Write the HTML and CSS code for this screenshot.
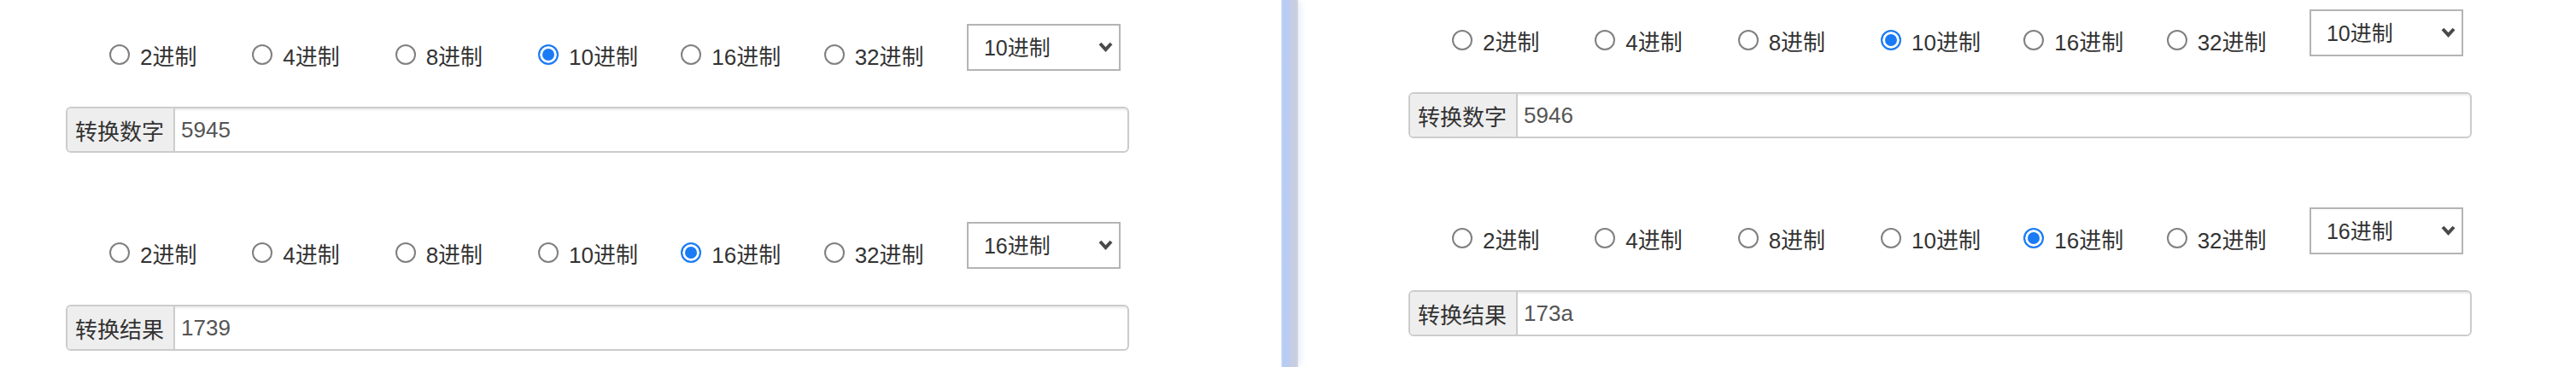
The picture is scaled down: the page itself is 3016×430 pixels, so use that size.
FILE: index.html
```html
<!DOCTYPE html>
<html lang="zh-CN">
<head>
<meta charset="utf-8">
<title>进制转换</title>
<link rel="stylesheet" href="styles.css">
</head>
<body>
<div class="page">
  <section class="panel panel-left">
    <div class="converter">
      <div class="row-head">
        <label class="opt"><input type="radio" name="l1"><span>2进制</span></label>
        <label class="opt"><input type="radio" name="l1"><span>4进制</span></label>
        <label class="opt"><input type="radio" name="l1"><span>8进制</span></label>
        <label class="opt"><input type="radio" name="l1" checked><span>10进制</span></label>
        <label class="opt"><input type="radio" name="l1"><span>16进制</span></label>
        <label class="opt"><input type="radio" name="l1"><span>32进制</span></label>
        <div class="select-wrap">
          <select class="base-select"><option>10进制</option></select>
          <svg class="chev" viewBox="0 0 17 13" width="17" height="13"><polyline points="2,3 8.5,10 15,3" fill="none" stroke="#4a4a4a" stroke-width="4" stroke-linejoin="miter"/></svg>
        </div>
      </div>
      <div class="input-group">
        <span class="addon">转换数字</span>
        <input class="field" type="text" value="5945">
      </div>
    </div>
    <div class="converter">
      <div class="row-head">
        <label class="opt"><input type="radio" name="l2"><span>2进制</span></label>
        <label class="opt"><input type="radio" name="l2"><span>4进制</span></label>
        <label class="opt"><input type="radio" name="l2"><span>8进制</span></label>
        <label class="opt"><input type="radio" name="l2"><span>10进制</span></label>
        <label class="opt"><input type="radio" name="l2" checked><span>16进制</span></label>
        <label class="opt"><input type="radio" name="l2"><span>32进制</span></label>
        <div class="select-wrap">
          <select class="base-select"><option>16进制</option></select>
          <svg class="chev" viewBox="0 0 17 13" width="17" height="13"><polyline points="2,3 8.5,10 15,3" fill="none" stroke="#4a4a4a" stroke-width="4" stroke-linejoin="miter"/></svg>
        </div>
      </div>
      <div class="input-group">
        <span class="addon">转换结果</span>
        <input class="field" type="text" value="1739">
      </div>
    </div>
  </section>
  <div class="divider"></div>
  <section class="panel panel-right">
    <div class="converter">
      <div class="row-head">
        <label class="opt"><input type="radio" name="r1"><span>2进制</span></label>
        <label class="opt"><input type="radio" name="r1"><span>4进制</span></label>
        <label class="opt"><input type="radio" name="r1"><span>8进制</span></label>
        <label class="opt"><input type="radio" name="r1" checked><span>10进制</span></label>
        <label class="opt"><input type="radio" name="r1"><span>16进制</span></label>
        <label class="opt"><input type="radio" name="r1"><span>32进制</span></label>
        <div class="select-wrap">
          <select class="base-select"><option>10进制</option></select>
          <svg class="chev" viewBox="0 0 17 13" width="17" height="13"><polyline points="2,3 8.5,10 15,3" fill="none" stroke="#4a4a4a" stroke-width="4" stroke-linejoin="miter"/></svg>
        </div>
      </div>
      <div class="input-group">
        <span class="addon">转换数字</span>
        <input class="field" type="text" value="5946">
      </div>
    </div>
    <div class="converter">
      <div class="row-head">
        <label class="opt"><input type="radio" name="r2"><span>2进制</span></label>
        <label class="opt"><input type="radio" name="r2"><span>4进制</span></label>
        <label class="opt"><input type="radio" name="r2"><span>8进制</span></label>
        <label class="opt"><input type="radio" name="r2"><span>10进制</span></label>
        <label class="opt"><input type="radio" name="r2" checked><span>16进制</span></label>
        <label class="opt"><input type="radio" name="r2"><span>32进制</span></label>
        <div class="select-wrap">
          <select class="base-select"><option>16进制</option></select>
          <svg class="chev" viewBox="0 0 17 13" width="17" height="13"><polyline points="2,3 8.5,10 15,3" fill="none" stroke="#4a4a4a" stroke-width="4" stroke-linejoin="miter"/></svg>
        </div>
      </div>
      <div class="input-group">
        <span class="addon">转换结果</span>
        <input class="field" type="text" value="173a">
      </div>
    </div>
  </section>
</div>
</body>
</html>
```
FILE: styles.css
```css
html, body {
  margin: 0;
  padding: 0;
  background: #fff;
}

body {
  font-family: "Liberation Sans", "Noto Sans CJK SC", sans-serif;
  color: #333;
}

.page {
  display: flex;
  height: 430px;
  overflow: hidden;
}

.panel {
  box-sizing: border-box;
}

.panel-left {
  width: 1500px;
  flex: none;
  padding: 28px 0 0 77px;
}

.panel-right {
  flex: 1;
  padding: 11px 0 0 129px;
}

.divider {
  width: 20px;
  flex: none;
  background: linear-gradient(to right, #dbe5fa 0px, #b7cbf6 2px, #b9ccf3 8px, #c4cde5 11px, #c9cfdf 18px, #d9dde8 20px);
  box-shadow: 5px 0 7px -2px rgba(205, 214, 236, 0.45);
  position: relative;
  z-index: 1;
}

.converter {
  width: 1245px;
  margin-bottom: 81px;
}

.row-head {
  display: grid;
  grid-template-columns: repeat(6, 167.33px) 180px;
  padding-left: 51px;
  height: 55px;
  align-items: start;
}

.opt {
  display: flex;
  align-items: center;
  gap: 12px;
  margin-top: 24px;
  height: 24px;
  font-size: 26px;
  color: #333;
  white-space: nowrap;
}

.opt input {
  appearance: none;
  -webkit-appearance: none;
  flex: none;
  box-sizing: border-box;
  width: 24px;
  height: 24px;
  margin: 0;
  border: 2px solid #808080;
  border-radius: 50%;
  background: #fff;
}

.opt input:checked {
  border-color: #1b7bf5;
  background: #1b7bf5;
  box-shadow: inset 0 0 0 3px #fff;
}

.select-wrap {
  position: relative;
  width: 180px;
  height: 55px;
}

.base-select {
  appearance: none;
  -webkit-appearance: none;
  box-sizing: border-box;
  width: 100%;
  height: 100%;
  margin: 0;
  padding: 0 0 0 18px;
  border: 2px solid #b4b4b4;
  border-radius: 0;
  background: #fff;
  font-family: "Liberation Sans", "Noto Sans CJK SC", sans-serif;
  font-size: 25px;
  color: #333;
}

.chev {
  position: absolute;
  right: 9px;
  top: 20px;
  pointer-events: none;
}

.input-group {
  display: flex;
  box-sizing: border-box;
  margin-top: 42px;
  height: 54px;
  border: 2px solid #cccccc;
  border-radius: 6px;
  box-shadow: inset 0 2px 2px rgba(0, 0, 0, 0.075);
  overflow: hidden;
}

.addon {
  flex: none;
  box-sizing: border-box;
  width: 126px;
  padding-left: 9px;
  display: flex;
  align-items: center;
  background: #eeeeee;
  border-right: 2px solid #cccccc;
  font-size: 26px;
  color: #333;
  white-space: nowrap;
}

.field {
  flex: 1;
  min-width: 0;
  border: none;
  outline: none;
  background: transparent;
  margin: 0;
  padding: 0 0 0 7px;
  font-family: "Liberation Sans", "Noto Sans CJK SC", sans-serif;
  font-size: 26px;
  color: #555;
}
```
